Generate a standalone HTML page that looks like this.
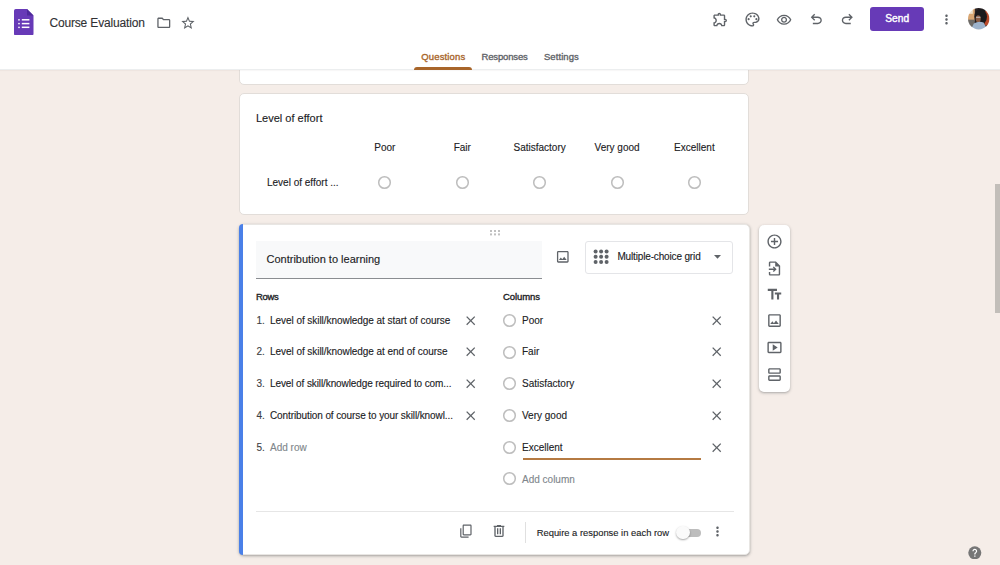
<!DOCTYPE html>
<html><head><meta charset="utf-8">
<style>
*{box-sizing:border-box;margin:0;padding:0}
html,body{width:1000px;height:565px;overflow:hidden}
body{background:#f5ede8;font-family:"Liberation Sans",sans-serif;color:#202124;position:relative}
.a{position:absolute}
.t{position:absolute;white-space:nowrap;line-height:1;-webkit-text-stroke:0.12px currentColor}
.b{-webkit-text-stroke:0}
svg.i{position:absolute;fill:#5f6368}
#hdr{left:0;top:0;width:1000px;height:70px;background:#fff;border-bottom:1px solid #eceeef;box-shadow:0 1px 1px rgba(60,40,20,0.035);z-index:5}
.card{position:absolute;background:#fff;border:1px solid #e2ddd9;border-radius:5px}
.radio{position:absolute;width:13px;height:13px;border:1.4px solid #bfbfbf;border-radius:50%}
.f10{font-size:10px}
.f11{font-size:11px}
</style></head>
<body>
<div id="hdr" class="a">
  <!-- forms logo -->
  <svg class="a" style="left:14px;top:8.5px" width="19.5" height="26.5" viewBox="0 0 19.5 26.5">
    <path d="M1.8 0H13L19.5 6.5V24.7a1.8 1.8 0 0 1-1.8 1.8H1.8A1.8 1.8 0 0 1 0 24.7V1.8A1.8 1.8 0 0 1 1.8 0z" fill="#673ab7"/>
    <path d="M13 0L19.5 6.5H13z" fill="#4e2a9a"/>
    <circle cx="5" cy="10.8" r="0.85" fill="#fff"/><rect x="7.8" y="10.05" width="7.6" height="1.5" fill="#fff"/>
    <circle cx="5" cy="14.6" r="0.85" fill="#fff"/><rect x="7.8" y="13.85" width="7.6" height="1.5" fill="#fff"/>
    <circle cx="5" cy="18.3" r="0.85" fill="#fff"/><rect x="7.8" y="17.55" width="7.6" height="1.5" fill="#fff"/>
  </svg>
  <div class="t" style="left:49.4px;top:16.6px;font-size:12px;color:#303134;letter-spacing:-0.16px">Course Evaluation</div>
  <svg class="i" style="left:155.7px;top:14.9px" width="15.6" height="15.6" viewBox="0 0 24 24"><path d="M9.17 6l2 2H20v10H4V6h5.17M10 4H4c-1.1 0-1.99.9-1.99 2L2 18c0 1.1.9 2 2 2h16c1.1 0 2-.9 2-2V8c0-1.1-.9-2-2-2h-8l-2-2z"/></svg>
  <svg class="i" style="left:179.8px;top:15.3px" width="15.9" height="15.9" viewBox="0 0 24 24"><path d="M22 9.24l-7.19-.62L12 2 9.19 8.63 2 9.24l5.46 4.730L5.82 21 12 17.27 18.18 21l-1.630-7.03L22 9.24zM12 15.4l-3.76 2.27 1-4.28-3.32-2.88 4.38-.38L12 6.1l1.71 4.04 4.38.38-3.32 2.88 1 4.28L12 15.4z"/></svg>

  <!-- right icons -->
  <svg class="i" style="left:712.2px;top:11.05px" width="16.7" height="16.7" viewBox="0 0 24 24"><path d="M10.5 4.5c.28 0 .5.22.5.5v2h6v6h2c.28 0 .5.22.5.5s-.22.5-.5.5h-2v6h-2.12c-.68-1.75-2.39-3-4.38-3s-3.7 1.25-4.38 3H4v-2.12c1.75-.68 3-2.39 3-4.38 0-1.990-1.24-3.7-2.99-4.38L4 7h6V5c0-.28.22-.5.5-.5m0-2C9.12 2.5 8 3.62 8 5H4c-1.1 0-1.99.9-1.99 2v3.8h.29c1.49 0 2.7 1.21 2.7 2.7s-1.21 2.7-2.7 2.7H2V20c0 1.1.9 2 2 2h3.8v-.3c0-1.49 1.21-2.7 2.7-2.7s2.7 1.21 2.7 2.7v.3H17c1.1 0 2-.9 2-2v-4c1.38 0 2.5-1.12 2.5-2.5S20.38 11 19 11V7c0-1.1-.9-2-2-2h-4c0-1.38-1.12-2.5-2.5-2.5z"/></svg>
  <svg class="i" style="left:743.6px;top:10.5px" width="17" height="17" viewBox="0 0 24 24"><path d="M12 22C6.49 22 2 17.51 2 12S6.49 2 12 2s10 4.04 10 9c0 3.31-2.69 6-6 6h-1.77c-.28 0-.5.22-.5.5 0 .12.05.23.13.33.41.47.64 1.06.64 1.67 0 1.38-1.12 2.5-2.5 2.5zm0-18c-4.41 0-8 3.59-8 8s3.59 8 8 8c.28 0 .5-.22.5-.5 0-.16-.08-.28-.14-.35-.41-.46-.63-1.05-.63-1.650 0-1.38 1.12-2.5 2.5-2.5H16c2.21 0 4-1.79 4-4 0-3.86-3.59-7-8-7z"/><circle cx="6.5" cy="11.5" r="1.5"/><circle cx="9.5" cy="7.5" r="1.5"/><circle cx="14.5" cy="7.5" r="1.5"/><circle cx="17.5" cy="11.5" r="1.5"/></svg>
  <svg class="i" style="left:775.8px;top:11.8px" width="16.1" height="16.1" viewBox="0 0 24 24"><path d="M12 6c3.79 0 7.170 2.13 8.82 5.5C19.17 14.87 15.79 17 12 17s-7.17-2.13-8.82-5.5C4.83 8.13 8.21 6 12 6m0-2C7 4 2.73 7.11 1 11.5 2.73 15.89 7 19 12 19s9.27-3.11 11-7.5C21.27 7.11 17 4 12 4zm0 5c1.38 0 2.5 1.12 2.5 2.5S13.38 14 12 14s-2.5-1.12-2.5-2.5S10.62 9 12 9m0-2c-2.48 0-4.5 2.02-4.5 4.5S9.52 16 12 16s4.5-2.02 4.5-4.5S14.48 7 12 7z"/></svg>
  <svg class="i" style="left:807.7px;top:10.8px" width="16.6" height="16.6" viewBox="0 -960 960 960"><path d="M280-200v-80h284q63 0 109.5-40T720-420q0-60-46.5-100T564-560H312l104 104-56 56-200-200 200-200 56 56-104 104h252q97 0 166.5 63T800-420q0 94-69.5 157T564-200H280Z"/></svg>
  <svg class="i" style="left:839.2px;top:10.8px" width="16.6" height="16.6" viewBox="0 -960 960 960"><path d="M396-200q-97 0-166.5-63T160-420q0-94 69.5-157T396-640h252L544-744l56-56 200 200-200 200-56-56 104-104H396q-63 0-109.5 40T240-420q0 60 46.5 100T396-280h284v80H396Z"/></svg>
  <div class="a" style="left:870px;top:7px;width:54.3px;height:24px;background:#673ab7;border-radius:3px"></div>
  <div class="t" style="left:870px;top:14px;width:54.3px;text-align:center;font-size:10.2px;color:#fff;-webkit-text-stroke:0.4px #fff">Send</div>
  <svg class="i" style="left:939.3px;top:11.5px" width="15" height="15" viewBox="0 0 24 24"><path d="M12 8c1.1 0 2-.9 2-2s-.9-2-2-2-2 .9-2 2 .9 2 2 2zm0 2c-1.1 0-2 .9-2 2s.9 2 2 2 2-.9 2-2-.9-2-2-2zm0 6c-1.1 0-2 .9-2 2s.9 2 2 2 2-.9 2-2-.9-2-2-2z"/></svg>
  <!-- avatar -->
  <svg class="a" style="left:968.2px;top:8.4px" width="21.4" height="21.4" viewBox="0 0 22 22">
    <defs><clipPath id="av"><circle cx="11" cy="11" r="11"/></clipPath></defs>
    <g clip-path="url(#av)" style="filter:blur(0.35px)">
      <rect width="22" height="22" fill="#2a2224"/>
      <rect x="0" y="0" width="7" height="13" fill="#d9a672"/>
      <rect x="1" y="1" width="4" height="5" fill="#eee2cc"/>
      <rect x="0" y="12" width="7" height="10" fill="#6d6a66"/>
      <rect x="17" y="3" width="5" height="15" fill="#b9492a"/>
      <ellipse cx="13" cy="9" rx="6.5" ry="8" fill="#1c1a1c"/>
      <ellipse cx="10.5" cy="11" rx="2.6" ry="3.6" fill="#8c5d44"/>
      <rect x="8.3" y="9" width="4.5" height="1.3" fill="#c8c0c0" opacity="0.8"/>
      <path d="M3 22 L6 16 Q11 13 16 15 L20 22z" fill="#9db3cc"/>
    </g>
  </svg>
  <!-- tabs -->
  <div class="t" style="left:421.3px;top:52.4px;font-size:9.5px;color:#a8652a;letter-spacing:0.14px;-webkit-text-stroke:0.35px #a8652a">Questions</div>
  <div class="t" style="left:481.5px;top:52.4px;font-size:9.5px;color:#5f6368;letter-spacing:-0.15px;-webkit-text-stroke:0.35px #5f6368">Responses</div>
  <div class="t" style="left:543.9px;top:52.4px;font-size:9.5px;color:#5f6368;letter-spacing:0.09px;-webkit-text-stroke:0.35px #5f6368">Settings</div>
  <div class="a" style="left:414.3px;top:67px;width:57.7px;height:3px;background:#a8652a;border-radius:3px 3px 0 0"></div>
</div>

<!-- card 1 (partial) -->
<div class="card" style="left:239px;top:40px;width:510px;height:44.5px"></div>

<!-- card 2 -->
<div class="card" style="left:239px;top:92.8px;width:510px;height:122.2px">
</div>
<div class="t f11" style="left:256px;top:112.5px">Level of effort</div>
<div class="t f10" style="left:334.8px;top:142.7px;width:100px;text-align:center">Poor</div>
<div class="t f10" style="left:412.3px;top:142.7px;width:100px;text-align:center">Fair</div>
<div class="t f10" style="left:489.6px;top:142.7px;width:100px;text-align:center">Satisfactory</div>
<div class="t f10" style="left:567.1px;top:142.7px;width:100px;text-align:center">Very good</div>
<div class="t f10" style="left:644.4px;top:142.7px;width:100px;text-align:center">Excellent</div>
<div class="t f10" style="left:267px;top:177.8px">Level of effort ...</div>
<svg class="a" style="left:377.3px;top:175.0px" width="15" height="15" viewBox="0 0 15 15"><circle cx="7.5" cy="7.5" r="5.8" fill="none" stroke="#bdbdbd" stroke-width="1.5"/></svg>
<svg class="a" style="left:454.8px;top:175.0px" width="15" height="15" viewBox="0 0 15 15"><circle cx="7.5" cy="7.5" r="5.8" fill="none" stroke="#bdbdbd" stroke-width="1.5"/></svg>
<svg class="a" style="left:532.1px;top:175.0px" width="15" height="15" viewBox="0 0 15 15"><circle cx="7.5" cy="7.5" r="5.8" fill="none" stroke="#bdbdbd" stroke-width="1.5"/></svg>
<svg class="a" style="left:609.6px;top:175.0px" width="15" height="15" viewBox="0 0 15 15"><circle cx="7.5" cy="7.5" r="5.8" fill="none" stroke="#bdbdbd" stroke-width="1.5"/></svg>
<svg class="a" style="left:686.9px;top:175.0px" width="15" height="15" viewBox="0 0 15 15"><circle cx="7.5" cy="7.5" r="5.8" fill="none" stroke="#bdbdbd" stroke-width="1.5"/></svg>

<!-- card 3 -->
<div class="card" style="left:239px;top:224.3px;width:510.5px;height:330.3px;box-shadow:0 1px 2px rgba(60,64,67,0.3),0 1px 3px 1px rgba(60,64,67,0.12);border-color:#e8e6e3"></div>
<div class="a" style="left:239px;top:224.3px;width:4.3px;height:330.3px;background:#4a80e8;border-radius:5px 0 0 5px"></div>
<!-- drag handle -->
<svg class="a" style="left:489px;top:229px" width="12" height="8" viewBox="0 0 12 8" fill="#c0c0c0">
  <rect x="1" y="1" width="2" height="2"/><rect x="5" y="1" width="2" height="2"/><rect x="9" y="1" width="2" height="2"/>
  <rect x="1" y="4.4" width="2" height="2"/><rect x="5" y="4.4" width="2" height="2"/><rect x="9" y="4.4" width="2" height="2"/>
</svg>
<div class="a" style="left:256px;top:240.5px;width:286px;height:38px;background:#f8f9fa;border-bottom:1px solid #8a8d91"></div>
<div class="t f11" style="left:266.5px;top:253.7px">Contribution to learning</div>
<svg class="i" style="left:555.35px;top:248.8px" width="15.6" height="15.6" viewBox="0 0 24 24"><path d="M19 5v14H5V5h14m0-2H5c-1.1 0-2 .9-2 2v14c0 1.1.9 2 2 2h14c1.1 0 2-.9 2-2V5c0-1.1-.9-2-2-2zm-4.86 8.86l-3 3.87L9 13.14 6 17h12l-3.86-5.14z"/></svg>
<div class="a" style="left:584.7px;top:240.7px;width:148.5px;height:33px;border:1px solid #e4e5e8;border-radius:3px"></div>
<svg class="a" style="left:593px;top:248.5px" width="16" height="16" viewBox="0 0 16 16" fill="#5f6368">
  <circle cx="2.6" cy="2.5" r="2"/><circle cx="8.1" cy="2.5" r="2"/><circle cx="13.6" cy="2.5" r="2"/>
  <circle cx="2.6" cy="7.8" r="2"/><circle cx="8.1" cy="7.8" r="2"/><circle cx="13.6" cy="7.8" r="2"/>
  <circle cx="2.6" cy="13.1" r="2"/><circle cx="8.1" cy="13.1" r="2"/><circle cx="13.6" cy="13.1" r="2"/>
</svg>
<div class="t f10" style="left:617.4px;top:252.1px;letter-spacing:-0.15px">Multiple-choice grid</div>
<svg class="a" style="left:713.5px;top:255.3px" width="7" height="4" viewBox="0 0 7 4" fill="#5f6368"><path d="M0 0h7L3.5 3.8z"/></svg>

<div class="t" style="left:256px;top:292.1px;font-size:9.5px;color:#202124;letter-spacing:-0.3px;-webkit-text-stroke:0.35px #202124">Rows</div>
<div class="t" style="left:502.9px;top:292.1px;font-size:9.5px;color:#202124;letter-spacing:-0.05px;-webkit-text-stroke:0.35px #202124">Columns</div>

<!-- rows -->
<div class="t f10" style="left:256.5px;top:315.6px;color:#3c4043">1.</div>
<div class="t f10" style="left:270px;top:315.6px;letter-spacing:-0.05px">Level of skill/knowledge at start of course</div>
<div class="t f10" style="left:256.5px;top:346.8px;color:#3c4043">2.</div>
<div class="t f10" style="left:270px;top:346.8px;letter-spacing:-0.05px">Level of skill/knowledge at end of course</div>
<div class="t f10" style="left:256.5px;top:379.2px;color:#3c4043">3.</div>
<div class="t f10" style="left:270px;top:379.2px;letter-spacing:-0.1px">Level of skill/knowledge required to com...</div>
<div class="t f10" style="left:256.5px;top:411.1px;color:#3c4043">4.</div>
<div class="t f10" style="left:270px;top:411.1px;letter-spacing:-0.1px">Contribution of course to your skill/knowl...</div>
<div class="t f10" style="left:256.5px;top:443px;color:#3c4043">5.</div>
<div class="t f10" style="left:270px;top:443px;color:#80868b">Add row</div>

<!-- row close icons -->
<svg class="i" style="left:462.5px;top:312.7px" width="15.4" height="15.4" viewBox="0 0 24 24"><path d="M19 6.41L17.59 5 12 10.59 6.41 5 5 6.41 10.59 12 5 17.590 6.41 19 12 13.41 17.59 19 19 17.59 13.41 12z"/></svg>
<svg class="i" style="left:462.5px;top:344.3px" width="15.4" height="15.4" viewBox="0 0 24 24"><path d="M19 6.41L17.59 5 12 10.59 6.41 5 5 6.41 10.59 12 5 17.590 6.41 19 12 13.41 17.59 19 19 17.59 13.41 12z"/></svg>
<svg class="i" style="left:462.5px;top:376.2px" width="15.4" height="15.4" viewBox="0 0 24 24"><path d="M19 6.41L17.59 5 12 10.59 6.41 5 5 6.41 10.59 12 5 17.590 6.41 19 12 13.41 17.59 19 19 17.59 13.41 12z"/></svg>
<svg class="i" style="left:462.5px;top:407.9px" width="15.4" height="15.4" viewBox="0 0 24 24"><path d="M19 6.41L17.59 5 12 10.59 6.41 5 5 6.41 10.59 12 5 17.590 6.41 19 12 13.41 17.59 19 19 17.59 13.41 12z"/></svg>

<!-- columns -->
<svg class="a" style="left:501.9px;top:312.8px" width="15" height="15" viewBox="0 0 15 15"><circle cx="7.5" cy="7.5" r="5.8" fill="none" stroke="#bdbdbd" stroke-width="1.5"/></svg>
<div class="t f10" style="left:522px;top:315.6px">Poor</div>
<svg class="a" style="left:501.9px;top:344.5px" width="15" height="15" viewBox="0 0 15 15"><circle cx="7.5" cy="7.5" r="5.8" fill="none" stroke="#bdbdbd" stroke-width="1.5"/></svg>
<div class="t f10" style="left:522px;top:346.8px">Fair</div>
<svg class="a" style="left:501.9px;top:376.4px" width="15" height="15" viewBox="0 0 15 15"><circle cx="7.5" cy="7.5" r="5.8" fill="none" stroke="#bdbdbd" stroke-width="1.5"/></svg>
<div class="t f10" style="left:522px;top:379.2px">Satisfactory</div>
<svg class="a" style="left:501.9px;top:408.1px" width="15" height="15" viewBox="0 0 15 15"><circle cx="7.5" cy="7.5" r="5.8" fill="none" stroke="#bdbdbd" stroke-width="1.5"/></svg>
<div class="t f10" style="left:522px;top:411.1px">Very good</div>
<svg class="a" style="left:501.9px;top:439.8px" width="15" height="15" viewBox="0 0 15 15"><circle cx="7.5" cy="7.5" r="5.8" fill="none" stroke="#bdbdbd" stroke-width="1.5"/></svg>
<div class="t f10" style="left:522px;top:443px">Excellent</div>
<div class="a" style="left:522.6px;top:458px;width:178.8px;height:2px;background:#b57a42"></div>
<svg class="a" style="left:501.9px;top:471.2px" width="15" height="15" viewBox="0 0 15 15"><circle cx="7.5" cy="7.5" r="5.8" fill="none" stroke="#bdbdbd" stroke-width="1.5"/></svg>
<div class="t f10" style="left:522px;top:474.6px;color:#80868b">Add column</div>

<svg class="i" style="left:708.6px;top:312.7px" width="15.4" height="15.4" viewBox="0 0 24 24"><path d="M19 6.41L17.59 5 12 10.59 6.41 5 5 6.41 10.59 12 5 17.590 6.41 19 12 13.41 17.59 19 19 17.59 13.41 12z"/></svg>
<svg class="i" style="left:708.6px;top:344.3px" width="15.4" height="15.4" viewBox="0 0 24 24"><path d="M19 6.41L17.59 5 12 10.59 6.41 5 5 6.41 10.59 12 5 17.590 6.41 19 12 13.41 17.59 19 19 17.59 13.41 12z"/></svg>
<svg class="i" style="left:708.6px;top:376.2px" width="15.4" height="15.4" viewBox="0 0 24 24"><path d="M19 6.41L17.59 5 12 10.59 6.41 5 5 6.41 10.59 12 5 17.590 6.41 19 12 13.41 17.59 19 19 17.59 13.41 12z"/></svg>
<svg class="i" style="left:708.6px;top:407.9px" width="15.4" height="15.4" viewBox="0 0 24 24"><path d="M19 6.41L17.59 5 12 10.59 6.41 5 5 6.41 10.59 12 5 17.590 6.41 19 12 13.41 17.59 19 19 17.59 13.41 12z"/></svg>
<svg class="i" style="left:708.6px;top:439.6px" width="15.4" height="15.4" viewBox="0 0 24 24"><path d="M19 6.41L17.59 5 12 10.59 6.41 5 5 6.41 10.59 12 5 17.590 6.41 19 12 13.41 17.59 19 19 17.59 13.41 12z"/></svg>

<!-- footer -->
<div class="a" style="left:256px;top:511px;width:477.5px;height:1px;background:#e6e6e6"></div>
<svg class="i" style="left:459.3px;top:524.4px" width="14.4" height="14.4" viewBox="0 0 24 24"><g transform="translate(0,24) scale(1,-1)"><path d="M16 1H4c-1.1 0-2 .9-2 2v14h2V3h12V1zm3 4H8c-1.1 0-2 .9-2 2v14c0 1.1.9 2 2 2h11c1.1 0 2-.9 2-2V7c0-1.1-.9-2-2-2zm0 16H8V7h11v14z"/></g></svg>
<svg class="i" style="left:490.6px;top:522.8px" width="16" height="16" viewBox="0 -960 960 960"><path d="M280-120q-33 0-56.5-23.5T200-200v-520h-40v-80h200v-40h240v40h200v80h-40v520q0 33-23.5 56.5T680-120H280Zm400-600H280v520h400v-520ZM360-280h80v-360h-80v360Zm160 0h80v-360h-80v360Z"/></svg>
<div class="a" style="left:525px;top:522px;width:1px;height:21px;background:#e0e0e0"></div>
<div class="t" style="left:536.7px;top:528.2px;font-size:9.4px">Require a response in each row</div>
<div class="a" style="left:681px;top:528.5px;width:20.2px;height:8.5px;background:#bdbdbd;border-radius:5px"></div>
<div class="a" style="left:676.4px;top:525.9px;width:13.6px;height:13.6px;background:#fafafa;border-radius:50%;box-shadow:0 1px 2px rgba(0,0,0,0.35)"></div>
<svg class="i" style="left:709.9px;top:524.2px" width="15" height="15" viewBox="0 0 24 24"><path d="M12 8c1.1 0 2-.9 2-2s-.9-2-2-2-2 .9-2 2 .9 2 2 2zm0 2c-1.1 0-2 .9-2 2s.9 2 2 2 2-.9 2-2-.9-2-2-2zm0 6c-1.1 0-2 .9-2 2s.9 2 2 2 2-.9 2-2-.9-2-2-2z"/></svg>

<!-- side toolbar -->
<div class="a" style="left:758.6px;top:224.6px;width:31.8px;height:167.4px;background:#fff;border-radius:5px;box-shadow:0 1px 2px rgba(60,64,67,0.28),0 1px 3px 1px rgba(60,64,67,0.1)"></div>
<svg class="i" style="left:766px;top:233.3px" width="17" height="17" viewBox="0 0 24 24"><path d="M13 7h-2v4H7v2h4v4h2v-4h4v-2h-4V7zm-1-5C6.48 2 2 6.48 2 12s4.48 10 10 10 10-4.480 10-10S17.52 2 12 2zm0 18c-4.41 0-8-3.59-8-8s3.59-8 8-8 8 3.59 8 8-3.59 8-8 8z"/></svg>
<svg class="i" style="left:766px;top:260.1px" width="17" height="17" viewBox="0 0 24 24"><path d="M6 2h8l6 6v12c0 1.1-.9 2-2 2H6c-1.1 0-2-.9-2-2v-3h2v3h12V9h-5V4H6v5H4V4c0-1.1.9-2 2-2z"/><path d="M4 12h7.2l-1.6-1.6L11 9l4 4-4 4-1.4-1.4 1.6-1.6H4z"/></svg>
<svg class="i" style="left:766px;top:286.3px" width="17" height="17" viewBox="0 0 24 24"><path d="M2.5 4v3h5v12h3V7h5V4h-13zm19 5h-9v3h3v7h3v-7h3V9z"/></svg>
<svg class="i" style="left:766px;top:312.4px" width="17" height="17" viewBox="0 0 24 24"><path d="M19 5v14H5V5h14m0-2H5c-1.1 0-2 .9-2 2v14c0 1.1.9 2 2 2h14c1.1 0 2-.9 2-2V5c0-1.1-.9-2-2-2zm-4.86 8.86l-3 3.87L9 13.14 6 17h12l-3.86-5.14z"/></svg>
<svg class="i" style="left:766px;top:339.2px" width="17" height="17" viewBox="0 0 24 24"><path d="M9.5 7.5v9l7-4.5-7-4.5zM20 4H4c-1.1 0-2 .9-2 2v12c0 1.1.9 2 2 2h16c1.1 0 2-.9 2-2V6c0-1.1-.9-2-2-2zm0 14.01H4V5.99h16v12.02z"/></svg>
<svg class="i" style="left:766px;top:366.1px" width="17" height="17" viewBox="0 0 24 24"><path d="M19 13H5c-1.1 0-2 .9-2 2v4c0 1.1.9 2 2 2h14c1.1 0 2-.9 2-2v-4c0-1.1-.9-2-2-2zm0 6H5v-4h14v4zm0-16H5c-1.1 0-2 .9-2 2v4c0 1.1.9 2 2 2h14c1.1 0 2-.9 2-2V5c0-1.1-.9-2-2-2zm0 6H5V5h14v4z"/></svg>

<!-- scrollbar -->
<div class="a" style="left:994.6px;top:184px;width:5.4px;height:128.5px;background:#c2beb9"></div>
<!-- help -->
<svg class="a" style="left:968px;top:545.8px" width="13.6" height="13.6" viewBox="0 0 24 24">
  <circle cx="12" cy="12" r="11.5" fill="#767676"/>
  <path fill="#fff" d="M11 16.8h2.2V19H11zM12 5c-2.4 0-4.2 1.8-4.2 4.1h2.2c0-1.1.9-2 2-2s2 .9 2 2c0 2-3 1.8-3 5.2v.6h2.2v-.5c0-2.3 3-2.6 3-5.3C16.2 6.8 14.4 5 12 5z"/>
</svg>
</body></html>
